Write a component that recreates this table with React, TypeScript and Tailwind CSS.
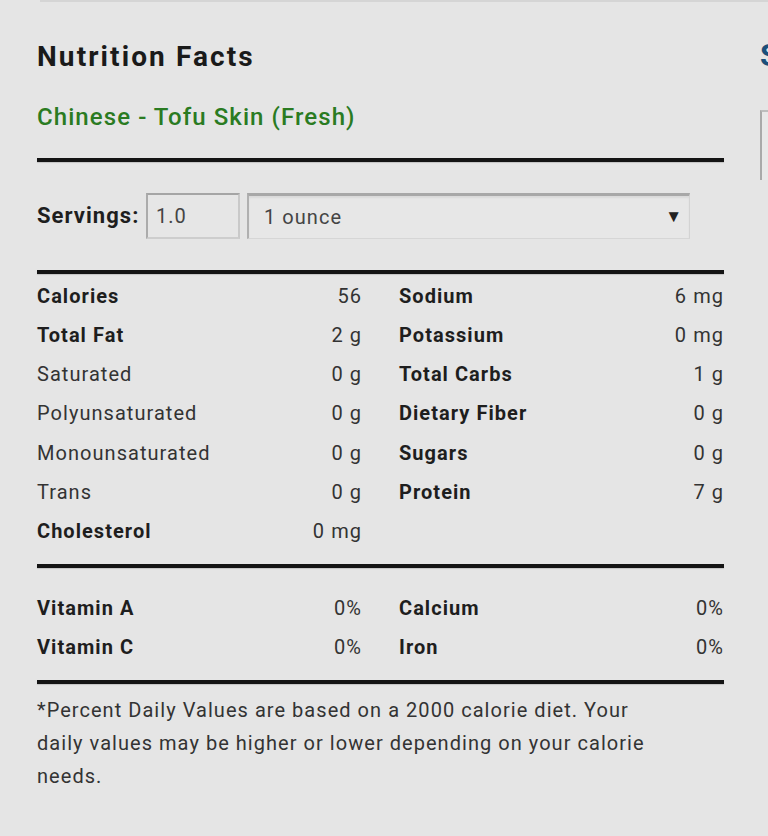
const nutrients: [string, string, boolean][] = [
  ['Calories', '56', true],
  ['Total Fat', '2 g', true],
  ['Saturated', '0 g', false],
  ['Polyunsaturated', '0 g', false],
  ['Monounsaturated', '0 g', false],
  ['Trans', '0 g', false],
  ['Cholesterol', '0 mg', true],
];

const minerals: [string, string, boolean][] = [
  ['Sodium', '6 mg', true],
  ['Potassium', '0 mg', true],
  ['Total Carbs', '1 g', true],
  ['Dietary Fiber', '0 g', true],
  ['Sugars', '0 g', true],
  ['Protein', '7 g', true],
];

const vitamins: [string, string][] = [
  ['Vitamin A', '0%'],
  ['Calcium', '0%'],
  ['Vitamin C', '0%'],
  ['Iron', '0%'],
];

function Rule({ className = '' }: { className?: string }) {
  return <div className={`h-[4px] bg-[#141414] shadow-[0_1px_1px_rgba(0,0,0,0.15)] ${className}`} />;
}

function Row({ label, value, bold }: { label: string; value: string; bold: boolean }) {
  return (
    <div className="flex justify-between leading-[39.3px] text-[20px]">
      <span className={bold ? 'font-bold text-[#1e1e1e]' : 'text-[#333]'}>{label}</span>
      <span className="text-[#333]">{value}</span>
    </div>
  );
}

export default function App() {
  return (
    <div className="min-h-screen w-full overflow-hidden bg-[#e5e5e5] tracking-[0.065em] font-['Roboto','Liberation_Sans',sans-serif]">
      {/* strip of the card above */}
      <div className="ml-[40px] h-[2px] bg-[#d5d5d5]" />

      <div className="flex gap-[36px] pl-[37px]">
        {/* nutrition facts */}
        <div className="w-[687px] shrink-0">
          <h1 className="mt-[38px] text-[28px] leading-[34px] font-bold tracking-[0.075em] text-[#1a1a1a]">Nutrition Facts</h1>
          <h2 className="mt-[28px] text-[24px] leading-[30px] font-medium tracking-[0.045em] text-[#2a7b22]">
            Chinese - Tofu Skin (Fresh)
          </h2>

          <Rule className="mt-[26px]" />

          {/* servings */}
          <div className="mt-[31px] flex items-center h-[46px]">
            <span className="w-[109px] shrink-0 text-[22px] leading-[26px] font-bold text-[#1e1e1e]">Servings:</span>
            <div className="w-[94px] h-[46px] shrink-0 flex items-center pl-[8px] border-2 border-t-[#a5a5a5] border-l-[#ababab] border-r-[#c9c9c9] border-b-[#cdcdcd] bg-[#e6e6e6] text-[20px] text-[#444]">
              1.0
            </div>
            <div className="ml-[7px] w-[443px] h-[46px] shrink-0 flex items-center justify-between pl-[15px] pr-[7px] border-t-[3px] border-l-2 border-r border-b border-t-[#a8a8a8] border-l-[#b0b0b0] border-r-[#d3d3d3] border-b-[#d6d6d6] bg-[#e7e7e7] shadow-[inset_0_2px_2px_rgba(0,0,0,0.06)] text-[20px] text-[#444]">
              <span>1 ounce</span>
              <span className="text-[17px] tracking-normal text-[#222]">▼</span>
            </div>
          </div>

          <Rule className="mt-[31px]" />

          {/* macros */}
          <div className="mt-[2.5px] grid grid-cols-2 gap-x-[37px]">
            <div>
              {nutrients.map(([l, v, b]) => (
                <Row key={l} label={l} value={v} bold={b} />
              ))}
            </div>
            <div>
              {minerals.map(([l, v, b]) => (
                <Row key={l} label={l} value={v} bold={b} />
              ))}
            </div>
          </div>

          <Rule className="mt-[12.5px]" />

          {/* vitamins */}
          <div className="mt-[20.5px] grid grid-cols-2 gap-x-[37px]">
            {vitamins.map(([l, v]) => (
              <div key={l} className="flex justify-between leading-[39px] text-[20px]">
                <span className="font-bold text-[#1e1e1e]">{l}</span>
                <span className="text-[#333]">{v}</span>
              </div>
            ))}
          </div>

          <Rule className="mt-[13.5px]" />

          <p className="mt-[9.5px] w-[636px] text-[20px] leading-[33px] text-[#333]">
            *Percent Daily Values are based on a 2000 calorie diet. Your daily values may be higher or lower
            depending on your calorie needs.
          </p>
        </div>

        {/* next column, cut off at the window edge */}
        <div className="w-[200px] shrink-0">
          <h2 className="mt-[36px] text-[31px] leading-[36px] font-bold text-[#1b4f7b] whitespace-nowrap">Similar Foods</h2>
          <div className="mt-[36px] h-[70px] border-t-2 border-l-2 border-t-[#bdbdbd] border-l-[#a9a9a9] bg-[#e8e8e8]" />
        </div>
      </div>
    </div>
  );
}
